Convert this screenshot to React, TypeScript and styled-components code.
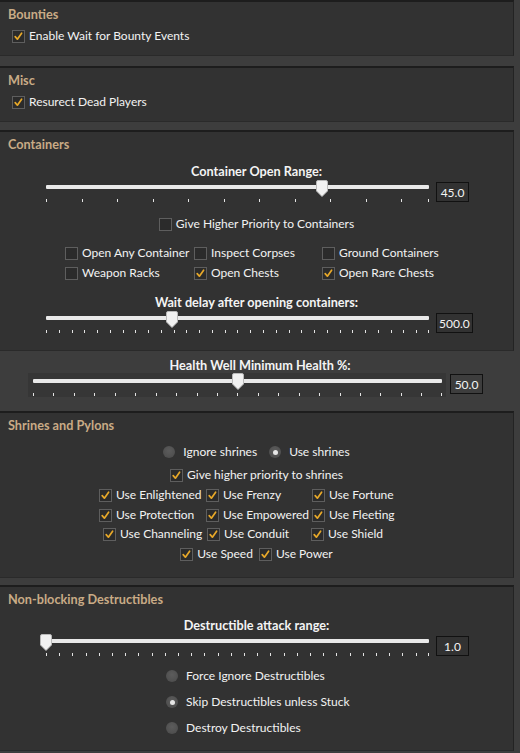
import styled, { createGlobalStyle } from "styled-components";

const GlobalStyle = createGlobalStyle`
  html, body {
    margin: 0;
    padding: 0;
    background: #3d3d3d;
  }
  body {
    font-family: Lato, "Noto Sans", sans-serif;
    font-size: 12px;
    color: #f2f2f2;
  }
`

const Page = styled.div`
  width: 520px;
  height: 753px;
  overflow: hidden;
  display: flex;
  flex-direction: column;
`

const Panel = styled.section<{ $pb: number; $mb: number }>`
  width: 514px;
  box-sizing: border-box;
  background: #323232;
  border-top: 2px solid #1d1d1d;
  border-right: 1px solid #232323;
  border-bottom: 1px solid #2a2a2a;
  padding: 4px 8px ${p => p.$pb}px;
  margin-bottom: ${p => p.$mb}px;
  display: flex;
  flex-direction: column;
  flex: none;
`

const Title = styled.h3`
  margin: 0;
  font-size: 12.7px;
  line-height: 16px;
  font-weight: 700;
  color: #c9ab86;
`

const Spaced = styled.div<{ $mt: number }>`
  margin-top: ${p => p.$mt}px;
  padding-left: 4px;
`

const CenterRow = styled.div<{ $mt: number; $gap?: number }>`
  margin-top: ${p => p.$mt}px;
  display: flex;
  justify-content: center;
  gap: ${p => p.$gap ?? 0}px;
`

const CheckGrid = styled.div<{ $mt: number; $indent: number; $cols: string }>`
  margin-top: ${p => p.$mt}px;
  padding-left: ${p => p.$indent}px;
  display: grid;
  grid-template-columns: ${p => p.$cols};
  row-gap: 4px;
`

const RadioStack = styled.div<{ $mt: number; $indent: number }>`
  margin-top: ${p => p.$mt}px;
  padding-left: ${p => p.$indent}px;
  display: flex;
  flex-direction: column;
  gap: 10px;
`

const Item = styled.label`
  display: flex;
  align-items: center;
  gap: 4px;
  height: 16px;
  white-space: nowrap;
  line-height: 16px;
`

const Box = styled.span`
  width: 13px;
  height: 13px;
  box-sizing: border-box;
  border: 1px solid #5e5e5e;
  background: #2b2b2b;
  display: inline-flex;
  align-items: center;
  justify-content: center;
  flex: none;
`

const RadioItem = styled(Item)`
  gap: 8px;
`

const RadioDot = styled.span<{ $on: boolean }>`
  width: 12px;
  height: 12px;
  border-radius: 50%;
  background: radial-gradient(circle at 50% 40%, #5c5c5c, #4a4a4a);
  display: inline-flex;
  align-items: center;
  justify-content: center;
  flex: none;

  &::after {
    content: "";
    width: 5px;
    height: 5px;
    border-radius: 50%;
    background: #e6e6e6;
    display: ${p => (p.$on ? "block" : "none")};
  }
`

const SliderLabel = styled.div<{ $mt: number }>`
  margin-top: ${p => p.$mt}px;
  text-align: center;
  font-size: 12.7px;
  font-weight: 700;
  line-height: 16px;
  color: #f4f4f4;
`

const SliderRow = styled.div<{ $mt: number; $indent: number }>`
  margin-top: ${p => p.$mt}px;
  padding-left: ${p => p.$indent}px;
  display: flex;
  align-items: flex-start;
`

const TrackArea = styled.div<{ $boxed?: boolean }>`
  padding: ${p => (p.$boxed ? "0 4px 0 5px" : "0")};
  height: ${p => (p.$boxed ? 24 : 23)}px;
  background: ${p => (p.$boxed ? "#363636" : "transparent")};
`

const Rail = styled.div<{ $boxed?: boolean }>`
  position: relative;
  height: 23px;
  display: flex;
  flex-direction: column;
  padding-top: ${p => (p.$boxed ? 6 : 5)}px;
  box-sizing: border-box;
`

const Line = styled.div`
  height: 4px;
  background: #e9e9e9;
  border-radius: 1px;
`

const Ticks = styled.div`
  margin-top: 10px;
  display: flex;
  justify-content: space-between;
  height: 3px;
`

const TickGroup = styled.div`
  display: flex;
`

const Tick = styled.span`
  width: 1px;
  height: 3px;
  background: #e4e4e4;
  flex: none;
`

const Thumb = styled.svg`
  position: absolute;
  top: 0;
`

const ValueBox = styled.div<{ $mt: number; $ml: number }>`
  margin-top: ${p => p.$mt}px;
  margin-left: ${p => p.$ml}px;
  min-width: 33px;
  height: 20px;
  padding: 0 2px;
  box-sizing: border-box;
  border: 1px solid #111111;
  display: flex;
  align-items: center;
  justify-content: center;
  font-size: 12px;
  color: #f4f4f4;
`

const HealthArea = styled.div`
  padding: 6px 0 14px;
  flex: none;
`

function Check({ label, on }: { label: string; on?: boolean }) {
  return (
    <Item>
      <Box>
        {on && (
          <svg width="11" height="11" viewBox="0 0 11 11">
            <path d="M2.2 5.6 L4.4 8.2 L8.6 2.2" fill="none" stroke="#e7a829" strokeWidth="1.7" strokeLinecap="round" strokeLinejoin="round" />
          </svg>
        )}
      </Box>
      <span>{label}</span>
    </Item>
  )
}

function Radio({ label, on }: { label: string; on?: boolean }) {
  return (
    <RadioItem>
      <RadioDot $on={!!on} />
      <span>{label}</span>
    </RadioItem>
  )
}

type SliderProps = {
  width: number
  value: string
  fraction: number
  step: number
  indent: number
  boxed?: boolean
}

function Slider({ width, value, fraction, step, indent, boxed }: SliderProps) {
  const count = Math.floor((width - 0.5) / step) + 1
  const ticks = Array.from({ length: count }, (_, i) => i)
  return (
    <SliderRow $mt={boxed ? 0 : 1} $indent={indent}>
      <TrackArea $boxed={boxed}>
        <Rail $boxed={boxed} style={{ width }}>
          <Line />
          <Ticks>
            <TickGroup style={{ gap: step - 1 }}>
              {ticks.map(t => <Tick key={t} />)}
            </TickGroup>
            <Tick />
          </Ticks>
          <Thumb width="12" height="17" viewBox="0 0 12 17" style={{ left: fraction * width - 6 }}>
            <path d="M2 0.5 H10 Q11.5 0.5 11.5 2 V11 L6 16.5 L0.5 11 V2 Q0.5 0.5 2 0.5 Z" fill="#f1f1f1" stroke="#b9b9b9" strokeWidth="1" />
          </Thumb>
        </Rail>
      </TrackArea>
      <ValueBox $mt={boxed ? 1 : 2} $ml={boxed ? 4 : 7}>{value}</ValueBox>
    </SliderRow>
  )
}

export default function App() {
  return (
    <Page>
      <GlobalStyle />

      <Panel $pb={11} $mb={10}>
        <Title>Bounties</Title>
        <Spaced $mt={6}>
          <Check label="Enable Wait for Bounty Events" on />
        </Spaced>
      </Panel>

      <Panel $pb={11} $mb={8}>
        <Title>Misc</Title>
        <Spaced $mt={6}>
          <Check label="Resurect Dead Players" on />
        </Spaced>
      </Panel>

      <Panel $pb={16} $mb={0}>
        <Title>Containers</Title>
        <SliderLabel $mt={11}>Container Open Range:</SliderLabel>
        <Slider width={383} value="45.0" fraction={0.72} step={35.5} indent={38} />
        <CenterRow $mt={13}>
          <Check label="Give Higher Priority to Containers" />
        </CenterRow>
        <CheckGrid $mt={13} $indent={57} $cols="129px 128px auto">
          <Check label="Open Any Container" />
          <Check label="Inspect Corpses" />
          <Check label="Ground Containers" />
          <Check label="Weapon Racks" />
          <Check label="Open Chests" on />
          <Check label="Open Rare Chests" on />
        </CheckGrid>
        <SliderLabel $mt={13}>Wait delay after opening containers:</SliderLabel>
        <Slider width={383} value="500.0" fraction={0.33} step={383 / 30} indent={38} />
      </Panel>

      <HealthArea>
        <SliderLabel $mt={0}>Health Well Minimum Health %:</SliderLabel>
        <Slider width={409} value="50.0" fraction={0.5} step={409 / 20} indent={28} boxed />
      </HealthArea>

      <Panel $pb={15} $mb={7}>
        <Title>Shrines and Pylons</Title>
        <CenterRow $mt={11} $gap={12}>
          <Radio label="Ignore shrines" />
          <Radio label="Use shrines" on />
        </CenterRow>
        <CenterRow $mt={7}>
          <Check label="Give higher priority to shrines" on />
        </CenterRow>
        <CheckGrid $mt={4} $indent={91} $cols="107px 106px auto">
          <Check label="Use Enlightened" on />
          <Check label="Use Frenzy" on />
          <Check label="Use Fortune" on />
          <Check label="Use Protection" on />
          <Check label="Use Empowered" on />
          <Check label="Use Fleeting" on />
        </CheckGrid>
        <CheckGrid $mt={3} $indent={95} $cols="104px 104px auto">
          <Check label="Use Channeling" on />
          <Check label="Use Conduit" on />
          <Check label="Use Shield" on />
        </CheckGrid>
        <CenterRow $mt={4} $gap={6}>
          <Check label="Use Speed" on />
          <Check label="Use Power" on />
        </CenterRow>
      </Panel>

      <Panel $pb={14} $mb={0}>
        <Title>Non-blocking Destructibles</Title>
        <SliderLabel $mt={10}>Destructible attack range:</SliderLabel>
        <Slider width={383} value="1.0" fraction={0} step={383 / 29} indent={38} />
        <RadioStack $mt={11} $indent={158}>
          <Radio label="Force Ignore Destructibles" />
          <Radio label="Skip Destructibles unless Stuck" on />
          <Radio label="Destroy Destructibles" />
        </RadioStack>
      </Panel>
    </Page>
  )
}
